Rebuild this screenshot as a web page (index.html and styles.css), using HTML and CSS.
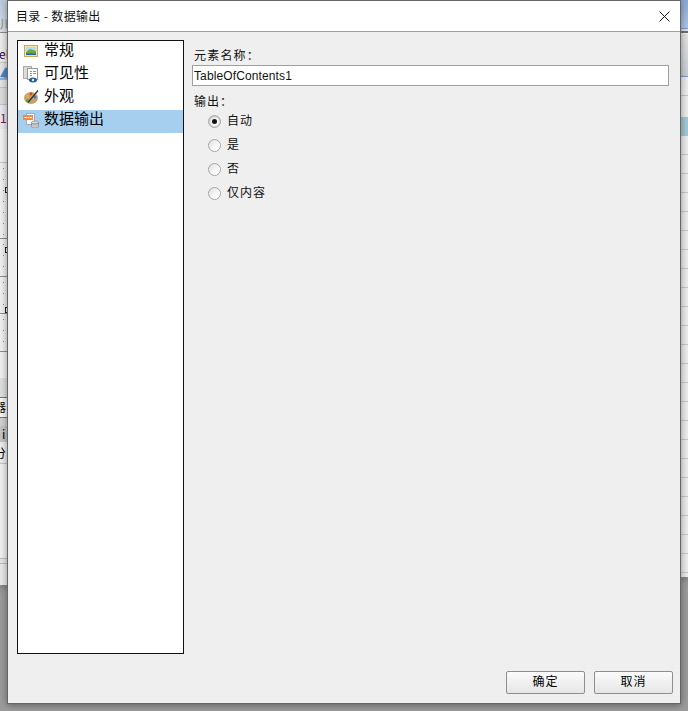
FILE: index.html
```html
<!DOCTYPE html>
<html lang="zh">
<head>
<meta charset="utf-8">
<title>目录 - 数据输出</title>
<link rel="stylesheet" href="styles.css">
</head>
<body>
<div class="backdrop">
  <div class="bg-left">
    <div class="lb lb-top"><span class="bg-txt t-grey">川</span></div>
    <div class="lb lb-el"><span class="bg-txt t-purple">el</span></div>
    <div class="lb lb-icon"><svg width="8" height="20" viewBox="0 0 8 20"><path d="M0 14L5 5l3-1v11z" fill="#4f86c0"/><path d="M0 16h8" stroke="#8fb2d8" stroke-width="2"/></svg></div>
    <div class="lb lb-gap"></div>
    <div class="lb lb-one"><span class="bg-txt t-navy">1</span></div>
    <div class="lb lb-ruler"><span class="mark mark-a"></span></div>
    <div class="lb lb-ruler2"><span class="mark mark-b"></span></div>
    <div class="lb lb-ruler3"><span class="mark mark-c"></span></div>
    <div class="lb lb-ruler4"></div>
    <div class="lb lb-band"></div>
    <div class="lb lb-tab"><span class="bg-txt t-tab">器</span></div>
    <div class="lb lb-i"><span class="bg-txt t-i">i</span></div>
    <div class="lb lb-fen"><span class="bg-txt t-fen">分</span></div>
    <div class="lb lb-rest"></div>
  </div>
  <div class="bg-right">
    <div class="rb rb-blue"></div>
    <div class="rb rb-dark"></div>
    <div class="rb rb-grad"></div>
    <div class="rb rb-plain"></div>
    <div class="rb rb-plain2"></div>
    <div class="rb rb-teal"></div>
    <div class="rb rb-rest"></div>
  </div>
</div>
<main class="dialog">
  <header class="titlebar">
    <h1 class="title">目录 - 数据输出</h1>
    <svg class="close" width="11" height="11" viewBox="0 0 11 11"><path d="M.5.5l10 10M10.500.5l-10 10" stroke="#111" stroke-width="1" fill="none"/></svg>
  </header>
  <div class="body">
    <div class="content">
      <ul class="nav">
        <li class="nav-item">
          <svg class="ico" width="16" height="16" viewBox="0 0 16 16"><rect x="1.500" y="2.500" width="13" height="11" fill="#f3e6ad" stroke="#c9ab58"/><rect x="3" y="4" width="10" height="5" fill="#b4dcf0"/><path d="M3 9l4-3 6 2v4H3z" fill="#62ad3e"/><path d="M3 10.500h10V12H3z" fill="#2c5fb0"/></svg>
          <span>常规</span>
        </li>
        <li class="nav-item">
          <svg class="ico" width="16" height="18" viewBox="0 0 16 18"><rect x=".5" y="1.500" width="8" height="12" fill="#dcdcdc" stroke="#aaa"/><rect x="4.500" y="3.500" width="10" height="11" fill="#fff" stroke="#999"/><path d="M7 6h2v1H7zM10 6h3v1h-3zM7 8h2v1H7zM10 8h3v1h-3z" fill="#6b9bd0"/><path d="M7 10h2v1H7z" fill="#d58a55"/><ellipse cx="10" cy="15" rx="4" ry="2.500" fill="#2a5f96"/><circle cx="10" cy="15" r="1.200" fill="#dfeefa"/></svg>
          <span>可见性</span>
        </li>
        <li class="nav-item">
          <svg class="ico" width="16" height="16" viewBox="0 0 16 16"><ellipse cx="8" cy="9" rx="7" ry="6" fill="#c9a06c"/><circle cx="4.500" cy="7" r="1.500" fill="#e8b030"/><circle cx="8" cy="5" r="1.400" fill="#d24a35"/><circle cx="12" cy="8" r="1.500" fill="#3f78c8"/><circle cx="4.500" cy="11.500" r="1.500" fill="#5aa83c"/><path d="M15 1.500L5 13.500" stroke="#333" stroke-width="1.300"/></svg>
          <span>外观</span>
        </li>
        <li class="nav-item selected">
          <svg class="ico" width="16" height="16" viewBox="0 0 16 16"><rect x="3.500" y="1.500" width="8" height="11" fill="#fafafa" stroke="#aaa"/><rect x="0" y="3" width="10" height="5" fill="#ec8a4a"/><path d="M1.500 5h2v1h-2zM4.500 5h2v1h-2zM7 5h2v1H7z" fill="#fff"/><ellipse cx="12" cy="10.500" rx="3.500" ry="1.500" fill="#ddd" stroke="#888" stroke-width=".7"/><path d="M8.500 10.500v4c0 1 1.500 1.500 3.500 1.500s3.500-.5 3.500-1.500v-4c0 1-1.500 1.500-3.500 1.500s-3.500-.5-3.500-1.500z" fill="#c8c8c8" stroke="#888" stroke-width=".7"/></svg>
          <span>数据输出</span>
        </li>
      </ul>
      <section class="panel">
        <label class="field-label" for="name">元素名称：</label>
        <input class="field" id="name" value="TableOfContents1">
        <div class="group-label">输出：</div>
        <div class="radios">
          <div class="radio-row"><span class="radio checked"></span><span class="radio-text">自动</span></div>
          <div class="radio-row"><span class="radio"></span><span class="radio-text">是</span></div>
          <div class="radio-row"><span class="radio"></span><span class="radio-text">否</span></div>
          <div class="radio-row"><span class="radio"></span><span class="radio-text">仅内容</span></div>
        </div>
      </section>
    </div>
    <footer class="actions">
      <button class="btn">确定</button>
      <button class="btn">取消</button>
    </footer>
  </div>
</main>
</body>
</html>
```
FILE: styles.css
```css
* { box-sizing: border-box; }
html, body { margin: 0; height: 711px; overflow: hidden; }
body {
  position: relative;
  width: 688px;
  background: #9b9b9b;
  font-family: "Noto Sans CJK SC", "Liberation Sans", sans-serif;
  color: #000;
}
.backdrop { position: absolute; inset: 0; display: flex; justify-content: space-between; align-items: flex-start; }

/* Window behind the dialog, visible as a strip on each side */
.bg-left { width: 8px; height: 585px; overflow: hidden; background: #e9e9e9; box-shadow: 0 3px 6px rgba(0,0,0,.25); }
.bg-right { width: 7px; height: 577px; overflow: hidden; background: #ececec; box-shadow: 0 3px 6px rgba(0,0,0,.25); }
.lb, .rb { overflow: hidden; border-bottom: 1px solid #c4c4c4; }
.bg-txt { display: block; font-size: 12px; line-height: 14px; white-space: nowrap; }

.lb-top { height: 33px; padding-top: 17px; background: linear-gradient(#b8c8dc, #d9dfe8); border-bottom-color: #8a8a8a; }
.t-grey { color: #888; margin-left: 0; }
.lb-el { height: 30px; padding-top: 14px; background: #ececec; }
.t-purple { color: #300050; margin-left: -1px; }
.lb-icon { height: 25px; background: #e4e4e4; }
.lb-icon svg { display: block; }
.lb-gap { height: 17px; background: #dcdcdc; }
.lb-one { height: 58px; background: linear-gradient(#e8e8f0 0, #e8e8f0 24px, #f1f1f1 24px, #f1f1f1); padding-top: 6px; }
.t-navy { color: #702040; margin-left: 0; }
.lb-ruler, .lb-ruler2, .lb-ruler3, .lb-ruler4 {
  position: relative;
  background-color: #efefef;
  background-image: repeating-linear-gradient(#888 0 1px, transparent 1px 11px);
  background-size: 1px 100%;
  background-position: 3px 5px;
  background-repeat: no-repeat;
  border-bottom-color: #8c8c8c;
}
.lb-ruler { height: 76px; }
.lb-ruler2 { height: 38px; }
.lb-ruler3 { height: 37px; }
.lb-ruler4 { height: 38px; }
.mark { position: absolute; left: 5px; width: 5px; height: 6px; border: 1px solid #222; }
.mark-a { top: 24px; }
.mark-b { top: 8px; }
.mark-c { top: 30px; }
.lb-band { height: 45px; background: linear-gradient(#efefef 0, #efefef 26px, #dedede 26px); border-bottom: 0; }
.lb-tab { height: 21px; background: #f6f6f6; border-top: 1px solid #3a80cc; border-bottom: 1px solid #3a80cc; }
.t-tab { margin-left: -6px; margin-top: 2px; }
.lb-i { height: 24px; background: linear-gradient(#d0d0d0 0, #d0d0d0 8px, #c4c4c4 8px); padding-top: 9px; }
.t-i { margin-left: 2px; }
.lb-fen { height: 22px; background: #ececec; }
.t-fen { margin-left: -6px; margin-top: 4px; }
.lb-rest {
  height: 120px;
  background: linear-gradient(#efefef 0, #efefef 94px, #bcbcbc 94px, #bcbcbc 95px, #e6e6e6 95px, #e6e6e6 99px, #bcbcbc 99px, #bcbcbc 100px, #e8e8e8 100px);
  border-bottom: 0;
}

.rb-blue { height: 29px; background: linear-gradient(#8aa7d2, #b0c6e4); border-bottom: 1px solid #7c9cc8; }
.rb-dark { height: 5px; background: linear-gradient(#dedede 0, #dedede 2px, #6f6f6f 2px, #6f6f6f 4px, #eee 4px); border-bottom: 0; }
.rb-grad { height: 43px; background: linear-gradient(#e2e2e2, #c9ccd4); border-bottom: 1px solid #6f9ad0; }
.rb-plain { height: 19px; background: #ececec; }
.rb-plain2 { height: 21px; background: #ececec; border-bottom: 0; }
.rb-teal { height: 19px; background: #a2c7d3; border-bottom: 0; }
.rb-rest {
  height: 441px;
  background-color: #ececec;
  background-image: repeating-linear-gradient(#ececec 0 18px, #c8c8c8 18px 19px);
  border-bottom: 0;
}

/* Dialog */
.dialog {
  position: absolute; left: 7px; top: 0; width: 674px; height: 704px;
  display: flex; flex-direction: column;
  background: #efefef;
  border: 1px solid #666;
  box-shadow: 0 1px 7px rgba(0,0,0,.4);
}
.titlebar {
  height: 31px; flex: none;
  display: flex; align-items: center; justify-content: space-between;
  padding: 0 10px 0 8px;
  background: #fff;
  border-bottom: 1px solid #a0a0a0;
}
.title { margin: 0; font-size: 12px; font-weight: 400; line-height: 16px; letter-spacing: .35px; color: #111; }
.body { flex: 1; display: flex; flex-direction: column; padding: 8px 7px 9px 9px; min-height: 0; }
.content { height: 614px; flex: none; display: flex; }
.nav {
  width: 167px; height: 614px; margin: 0; padding: 0; list-style: none; flex: none;
  background: #fff; border: 1px solid #111;
}
.nav-item {
  height: 23px; display: flex; align-items: center; gap: 5px; padding-left: 4px;
  font-size: 15px; line-height: 18px;
}
.nav-item span { display: block; margin-bottom: 8px; }
.selected { background: #a6cfef; }
.ico { flex: none; margin-bottom: 3px; margin-left: 1px; }
.panel { flex: 1; padding: 7px 4px 0 8px; min-width: 0; }
.field-label { display: block; font-size: 12px; line-height: 16px; letter-spacing: 1.2px; margin-left: 2px; color: #111; }
.field {
  display: block; width: 100%; height: 21px; margin-top: 2px; padding: 0 1px;
  border: 1px solid #a0a0a0; background: #fff; outline: 0;
  font: 12px/19px "Liberation Sans", sans-serif; letter-spacing: .12px; color: #111;
}
.group-label { font-size: 12px; line-height: 16px; letter-spacing: 1px; margin: 7px 0 0 2px; color: #111; }
.radios { display: flex; flex-direction: column; padding-left: 16px; }
.radio-row { height: 24px; display: flex; align-items: center; gap: 6px; font-size: 12px; letter-spacing: 1px; color: #111; }
.radio-text { margin-bottom: 4px; }
.radio {
  width: 13px; height: 13px; border-radius: 50%; border: 1px solid #a4a4a4;
  background: linear-gradient(135deg, #dedede, #fff 75%);
  flex: none; display: flex; align-items: center; justify-content: center;
}
.checked { box-shadow: inset 0 0 2px #999; }
.checked::after { content: ""; width: 5px; height: 5px; border-radius: 50%; background: #111; }
.actions { flex: 1; display: flex; justify-content: flex-end; align-items: flex-end; gap: 9px; }
.btn {
  width: 79px; height: 23px; padding: 0 0 3px;
  border: 1px solid #8f8f8f; border-radius: 2px;
  background: linear-gradient(#fbfbfb, #e6e6e6);
  font: 12px/1 "Noto Sans CJK SC", sans-serif; letter-spacing: 1px; color: #000;
}
```
